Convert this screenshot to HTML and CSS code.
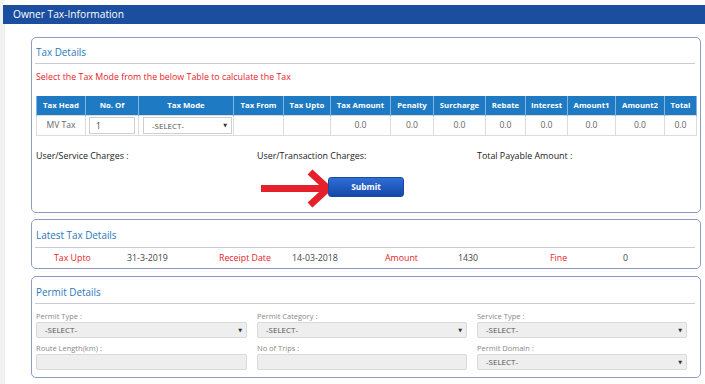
FILE: index.html
```html
<!DOCTYPE html>
<html>
<head>
<meta charset="utf-8">
<link rel="stylesheet" href="styles.css">
</head>
<body>
<div class="topbar">Owner Tax-Information</div>
<div class="content">
  <div class="panel panel-tax">
    <div class="ptitle">Tax Details</div>
    <div class="note">Select the Tax Mode from the below Table to calculate the Tax</div>
    <table class="taxtable">
      <colgroup>
        <col style="width:49px"><col style="width:53px"><col style="width:95px"><col style="width:50px"><col style="width:47px"><col style="width:60px"><col style="width:43px"><col style="width:52px"><col style="width:40px"><col style="width:42px"><col style="width:48px"><col style="width:49px"><col style="width:32px">
      </colgroup>
      <thead>
        <tr><th>Tax Head</th><th>No. Of</th><th>Tax Mode</th><th>Tax From</th><th>Tax Upto</th><th>Tax Amount</th><th>Penalty</th><th>Surcharge</th><th>Rebate</th><th>Interest</th><th>Amount1</th><th>Amount2</th><th>Total</th></tr>
      </thead>
      <tbody>
        <tr>
          <td>MV Tax</td>
          <td class="cell-in"><div class="tin">1</div></td>
          <td class="cell-in"><div class="tsel"><span>-SELECT-</span><span class="caret">&#9660;</span></div></td>
          <td></td><td></td>
          <td>0.0</td><td>0.0</td><td>0.0</td><td>0.0</td><td>0.0</td><td>0.0</td><td>0.0</td><td>0.0</td>
        </tr>
      </tbody>
    </table>
    <div class="charges">
      <div>User/Service Charges :</div>
      <div>User/Transaction Charges:</div>
      <div>Total Payable Amount :</div>
    </div>
    <div class="submitrow">
      <div class="btnwrap">
        <svg class="arrow" width="72" height="38" viewBox="0 0 72 38">
          <rect x="0" y="16" width="62" height="7" fill="#e5202a"/>
          <polyline points="49,3 67,19.5 49,36" fill="none" stroke="#e5202a" stroke-width="7"/>
        </svg>
        <button class="submit">Submit</button>
      </div>
    </div>
  </div>

  <div class="panel panel-latest">
    <div class="ptitle">Latest Tax Details</div>
    <div class="latest">
      <span class="lbl">Tax Upto</span><span class="val">31-3-2019</span>
      <span class="lbl">Receipt Date</span><span class="val">14-03-2018</span>
      <span class="lbl">Amount</span><span class="val">1430</span>
      <span class="lbl">Fine</span><span class="val">0</span>
    </div>
  </div>

  <div class="panel panel-permit">
    <div class="ptitle">Permit Details</div>
    <div class="fields">
      <div class="field">
        <div class="flabel">Permit Type :</div>
        <div class="fsel"><span>-SELECT-</span><span class="caret">&#9660;</span></div>
      </div>
      <div class="field">
        <div class="flabel">Permit Category :</div>
        <div class="fsel"><span>-SELECT-</span><span class="caret">&#9660;</span></div>
      </div>
      <div class="field">
        <div class="flabel">Service Type :</div>
        <div class="fsel"><span>-SELECT-</span><span class="caret">&#9660;</span></div>
      </div>
      <div class="field">
        <div class="flabel second">Route Length(km) :</div>
        <div class="finput"></div>
      </div>
      <div class="field">
        <div class="flabel second">No of Trips :</div>
        <div class="finput"></div>
      </div>
      <div class="field">
        <div class="flabel second">Permit Domain :</div>
        <div class="fsel"><span>-SELECT-</span><span class="caret">&#9660;</span></div>
      </div>
    </div>
  </div>
</div>
</body>
</html>
```

FILE: styles.css
```css
* { box-sizing: border-box; }
html, body { margin: 0; padding: 0; background: #fff; }
body {
  font-family: "Open Sans", "DejaVu Sans", sans-serif;
  color: #333;
  width: 705px;
  height: 384px;
  overflow: hidden;
  background: linear-gradient(to right, #f2f2f2 0, #f2f2f2 4px, #fff 4px);
}
.topbar {
  margin: 5px 0 0 3px;
  height: 19px;
  line-height: 19px;
  background: #1b4e9f;
  color: #fff;
  font-size: 10.2px;
  padding-left: 10px;
}
.content {
  margin-left: 4px;
  border-left: 1px solid #ececec;
  padding: 13px 4px 0 26px;
  background: #fff;
  height: 360px;
}
.panel {
  border: 1px solid #8d9dbe;
  border-radius: 5px;
  padding: 0 5px 0 3px;
  background: #fff;
}
.ptitle {
  color: #2a78b9;
  font-size: 9.9px;
  line-height: 15px;
  padding: 7px 0 3px 1px;
  border-bottom: 1px solid #c9cdd3;
}
.panel-latest .ptitle { padding-top: 8px; padding-bottom: 4px; }
.panel-permit .ptitle { padding-top: 8px; padding-bottom: 3px; }
.note {
  color: #e5232b;
  font-size: 8.85px;
  line-height: 14px;
  margin-top: 6px;
  padding-left: 1px;
}
.taxtable {
  margin-top: 12px;
  margin-left: 1px;
  width: 660px;
  border-collapse: collapse;
  table-layout: fixed;
  font-size: 8px;
}
.taxtable th {
  background: #1d7ac3;
  color: #fff;
  font-weight: 700;
  font-size: 7.8px;
  height: 19px;
  padding: 0;
  border-left: 1px solid #7fb5e2;
  border-right: 1px solid #7fb5e2;
  text-align: center;
  white-space: nowrap;
}
.taxtable td {
  height: 19px;
  border: 1px solid #dcdcdc;
  text-align: center;
  color: #666;
  font-size: 8.6px;
  padding: 0;
}
.taxtable td.cell-in { padding: 1px 3px; }
.tin {
  height: 17px;
  border: 1px solid #cfcfcf;
  text-align: left;
  padding-left: 6px;
  line-height: 15px;
  font-size: 8.5px;
  color: #444;
}
.tsel {
  height: 17px;
  border: 1px solid #cfcfcf;
  margin-left: 1px;
  width: 89px;
  display: flex;
  justify-content: space-between;
  align-items: center;
  padding: 0 4px 0 8px;
  font-size: 8px;
  color: #555;
}
.caret { font-size: 5px; color: #333; }
.charges {
  display: grid;
  grid-template-columns: 221px 220px 220px;
  font-size: 8.9px;
  line-height: 14px;
  color: #222;
  margin-top: 13px;
  padding-left: 1px;
}
.submitrow {
  display: flex;
  justify-content: center;
  padding: 14px 0 15px 0;
}
.btnwrap { position: relative; margin-left: 2px; }
.arrow { position: absolute; left: -67px; top: -8px; overflow: visible; }
.submit {
  position: relative;
  display: block;
  width: 76px;
  height: 20px;
  border: 1px solid #1a4aa0;
  border-radius: 3px;
  background: linear-gradient(#2f6fd6, #1447aa);
  color: #fff;
  font-family: "Open Sans", "DejaVu Sans", sans-serif;
  font-weight: 700;
  font-size: 8.3px;
  padding: 0;
}
.panel-tax { margin-bottom: 6px; }
.panel-latest { margin-bottom: 7px; }
.latest {
  display: grid;
  grid-template-columns: 73px 92px 73px 93px 73px 92px 73px 80px;
  padding: 1px 0 0 19px;
  font-size: 8.8px;
  line-height: 19px;
}
.latest .lbl { color: #e5232b; }
.latest .val { color: #444; }
.fields {
  display: grid;
  grid-template-columns: 211px 210px 210px;
  column-gap: 10px;
  padding: 0 0 7px 1px;
}
.flabel {
  font-size: 7.5px;
  color: #888;
  line-height: 11px;
  padding-top: 7px;
}
.flabel.second { padding-top: 5px; }
.fsel, .finput {
  height: 16px;
  background: #eeeeee;
  border: 1px solid #d9d9d9;
  border-radius: 2px;
}
.fsel {
  display: flex;
  justify-content: space-between;
  align-items: center;
  padding: 0 4px 0 8px;
  font-size: 8px;
  color: #555;
}
```
